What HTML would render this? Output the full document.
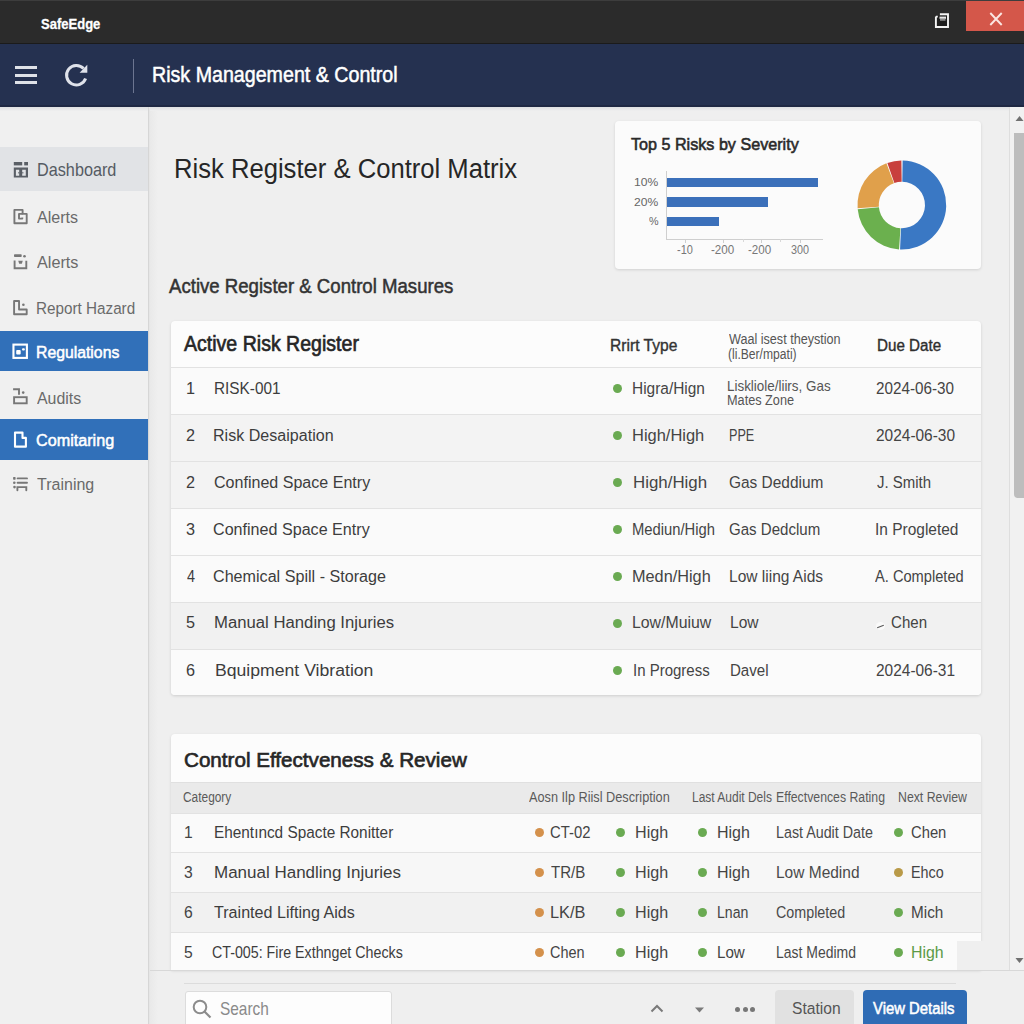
<!DOCTYPE html>
<html><head><meta charset="utf-8">
<style>
*{box-sizing:border-box;margin:0;padding:0}
html,body{width:1024px;height:1024px;overflow:hidden;background:#efefef;font-family:"Liberation Sans",sans-serif}
.a{position:absolute}
.tx{position:absolute;white-space:nowrap;transform-origin:0 0}
.dot{position:absolute;width:9px;height:9px;border-radius:50%}
.g{background:#6aaa52}
.o{background:#d4914c}
.ol{background:#b99a48}
</style></head><body>
<!-- title bar -->
<div class="a" style="left:0;top:0;width:1024px;height:44px;background:#2b2b2b"></div>
<div class="a" style="left:0;top:0;width:1024px;height:1px;background:#3d3d3d"></div>
<div class="a" style="left:0;top:43px;width:1024px;height:1px;background:#1b1b1b"></div>
<div class="a" style="left:966px;top:1px;width:58px;height:30px;background:#d4574a"></div>
<svg class="a" style="left:988px;top:10.5px" width="16" height="16" viewBox="0 0 16 16"><path d="M2.3 2L13.7 14M13.7 2L2.3 14" stroke="#fbe6e2" stroke-width="1.9"/></svg>
<svg class="a" style="left:926px;top:6px" width="32" height="32" viewBox="0 0 32 32"><rect x="10.5" y="10" width="10.5" height="10" fill="#1e1e1e"/><rect x="13.5" y="10.6" width="6.5" height="2.2" fill="#e6e6e6"/><rect x="14" y="12.8" width="5.5" height="2" fill="#8a8a8a"/><path d="M9.9 10.6H11.8M13.9 8.2H22V21H9.9V10.6" fill="none" stroke="#f4f4f4" stroke-width="1.9"/></svg>
<!-- header -->
<div class="a" style="left:0;top:44px;width:1024px;height:63px;background:#253150"></div>
<div class="a" style="left:15px;top:66px;width:22px;height:3px;background:#dfe2e8"></div>
<div class="a" style="left:15px;top:73.5px;width:22px;height:3px;background:#dfe2e8"></div>
<div class="a" style="left:15px;top:81px;width:22px;height:3px;background:#dfe2e8"></div>
<svg class="a" style="left:60px;top:58px" width="34" height="34" viewBox="0 0 34 34"><path d="M25.6 20.6A9.8 9.8 0 1 1 23.6 10.6" fill="none" stroke="#dfe2ea" stroke-width="3"/><path d="M19.6 14.8L27.3 6.8V14.8Z" fill="#dfe2ea"/></svg>
<div class="a" style="left:133px;top:59px;width:1px;height:34px;background:#6c7590"></div>
<div class="a" style="left:0;top:105px;width:1024px;height:2px;background:#1f2843"></div>
<div class="a" style="left:0;top:107px;width:1024px;height:4px;background:linear-gradient(#dedfe1,#efefef)"></div>
<!-- sidebar -->
<div class="a" style="left:0;top:111px;width:148px;height:913px;background:#f0f0f0"></div>
<div class="a" style="left:148px;top:107px;width:1px;height:917px;background:#d6d6d6"></div><div class="a" style="left:149px;top:107px;width:1px;height:917px;background:#e6e6e6"></div><div class="a" style="left:150px;top:111px;width:8px;height:913px;background:linear-gradient(90deg,#e9e9e9,#efefef)"></div>
<div class="a" style="left:0;top:147px;width:148px;height:44px;background:#e1e3e6"></div>
<div class="a" style="left:0;top:331px;width:148px;height:40px;background:#3170b9"></div>
<div class="a" style="left:0;top:419px;width:148px;height:41px;background:#3170b9"></div>
<!-- sidebar icons -->
<svg class="a" style="left:13px;top:161px" width="16" height="18" viewBox="0 0 16 18"><g fill="#5a5f66"><rect x="0.8" y="1" width="8.4" height="3.4"/><rect x="11.2" y="1" width="3.8" height="3.4"/><path fill-rule="evenodd" d="M0.8 6.4H15V16.6H0.8Z M2.9 8.7H6.2V14.8H2.9Z M9.2 8.7H12.8V14.8H9.2Z"/><rect x="5.2" y="11.2" width="1.1" height="1.2"/><rect x="9.2" y="11.2" width="1.2" height="1.2"/></g></svg>
<svg class="a" style="left:8px;top:204px" width="26" height="26" viewBox="0 0 26 26"><g fill="none" stroke="#777" stroke-width="1.9" stroke-linejoin="round"><path d="M6.4 5.9H14.6V9.9H18.7V19.2H6.4Z"/><path d="M14.6 9.9H11V14.6H14.3V13.4"/></g></svg>
<svg class="a" style="left:8px;top:249px" width="26" height="26" viewBox="0 0 26 26"><g fill="#777"><rect x="6" y="5.3" width="7.7" height="2.7" rx="0.8"/><circle cx="16.5" cy="7.3" r="1.3"/><path d="M10.2 11.7H14.8L13.8 14.7H11.2Z"/></g><path d="M6.6 11.5V19.3H18.3V11.7" fill="none" stroke="#777" stroke-width="1.9"/></svg>
<svg class="a" style="left:8px;top:295px" width="26" height="26" viewBox="0 0 26 26"><path d="M6.1 6H11.05V14.5H18.7V19.2H6.1Z" fill="none" stroke="#777" stroke-width="1.9" stroke-linejoin="round"/><circle cx="15.4" cy="9.8" r="1.3" fill="#777"/></svg>
<svg class="a" style="left:8px;top:338px" width="26" height="26" viewBox="0 0 26 26"><rect x="5.45" y="6.6" width="13.45" height="13.3" fill="none" stroke="#fff" stroke-width="2.1"/><rect x="8.2" y="12" width="4.5" height="4.4" rx="1" fill="#fff"/><rect x="14" y="10.3" width="2.9" height="2.2" rx="1.1" fill="#fff"/></svg>
<svg class="a" style="left:8px;top:384px" width="26" height="26" viewBox="0 0 26 26"><g fill="none" stroke="#777" stroke-width="1.9"><path d="M5.1 5.2H11V10.8"/><rect x="6.1" y="13.2" width="12.6" height="6.1"/></g><circle cx="15.2" cy="8.6" r="1.3" fill="#777"/></svg>
<svg class="a" style="left:8px;top:427px" width="26" height="26" viewBox="0 0 26 26"><path d="M7 5.6H14.5V10.9H17.9V19.65H7Z" fill="none" stroke="#fff" stroke-width="2.1" stroke-linejoin="round"/></svg>
<svg class="a" style="left:8px;top:471px" width="26" height="26" viewBox="0 0 26 26"><g fill="#777"><rect x="5.1" y="6.1" width="2.5" height="2.6" rx="0.6"/><circle cx="6.3" cy="11.8" r="1.3"/><circle cx="6.5" cy="16.1" r="1.3"/></g><g fill="none" stroke="#777" stroke-width="1.9" stroke-linecap="round"><path d="M9.6 7.4H19"/><path d="M9.6 11.8H19"/><path d="M9.4 19.3V16.1H18.3V19.3"/></g></svg>
<!-- chart card -->
<div class="a" style="left:615px;top:121px;width:366px;height:148px;background:#fbfbfb;border-radius:4px;box-shadow:0 1px 3px rgba(0,0,0,0.13)"></div>
<div class="a" style="left:666px;top:171px;width:1px;height:68px;background:#cfcfcf"></div>
<div class="a" style="left:666px;top:239px;width:157px;height:1px;background:#cfcfcf"></div>
<div class="a" style="left:685px;top:239px;width:1px;height:4px;background:#cfcfcf"></div>
<div class="a" style="left:723px;top:239px;width:1px;height:4px;background:#cfcfcf"></div>
<div class="a" style="left:743px;top:239px;width:1px;height:3px;background:#d8d8d8"></div>
<div class="a" style="left:761px;top:239px;width:1px;height:4px;background:#cfcfcf"></div>
<div class="a" style="left:780px;top:239px;width:1px;height:3px;background:#d8d8d8"></div>
<div class="a" style="left:800px;top:239px;width:1px;height:4px;background:#cfcfcf"></div>
<div class="a" style="left:667px;top:177.5px;width:150.5px;height:9px;background:#3b70ba"></div>
<div class="a" style="left:667px;top:197px;width:101px;height:9.5px;background:#3b70ba"></div>
<div class="a" style="left:667px;top:216.5px;width:51.5px;height:9.3px;background:#3b70ba"></div>
<svg class="a" style="left:852px;top:155px" width="100" height="100" viewBox="0 0 100 100">
<g transform="translate(50,50)">
<path id="seg" d="" />
</g>
<path d="M50.62 5.50A44.5 44.5 0 1 1 48.06 94.46L48.99 73.18A23.2 23.2 0 1 0 50.32 26.80Z" fill="#3a78c4"/><path d="M47.05 94.40A44.5 44.5 0 0 1 5.70 54.27L26.91 52.22A23.2 23.2 0 0 0 48.46 73.15Z" fill="#6bb04e"/><path d="M5.62 53.26A44.5 44.5 0 0 1 34.42 8.32L41.88 28.27A23.2 23.2 0 0 0 26.86 51.70Z" fill="#e0a04b"/><path d="M35.37 7.98A44.5 44.5 0 0 1 49.38 5.50L49.68 26.80A23.2 23.2 0 0 0 42.37 28.09Z" fill="#c8403d"/>
</svg>

<!-- card 1 -->
<div class="a" style="left:171px;top:321px;width:810px;height:374px;background:#fcfcfc;border-radius:4px;box-shadow:0 1px 3px rgba(0,0,0,0.14)"></div>
<div class="a" style="left:171px;top:367px;width:810px;height:47px;background:#fafafa"></div>
<div class="a" style="left:171px;top:414px;width:810px;height:94px;background:#f3f3f3"></div>
<div class="a" style="left:171px;top:508px;width:810px;height:94px;background:#fafafa"></div>
<div class="a" style="left:171px;top:602px;width:810px;height:47px;background:#f1f1f1"></div>
<div class="a" style="left:171px;top:649px;width:810px;height:46px;background:#fbfbfb;border-radius:0 0 4px 4px"></div>
<div class="a" style="left:171px;top:367px;width:810px;height:1px;background:#e2e2e2"></div>
<div class="a" style="left:171px;top:414px;width:810px;height:1px;background:#e2e2e2"></div>
<div class="a" style="left:171px;top:461px;width:810px;height:1px;background:#e2e2e2"></div>
<div class="a" style="left:171px;top:508px;width:810px;height:1px;background:#e2e2e2"></div>
<div class="a" style="left:171px;top:555px;width:810px;height:1px;background:#e2e2e2"></div>
<div class="a" style="left:171px;top:602px;width:810px;height:1px;background:#e2e2e2"></div>
<div class="a" style="left:171px;top:649px;width:810px;height:1px;background:#e2e2e2"></div>
<div class="dot g" style="left:612.5px;top:383.5px"></div>
<div class="dot g" style="left:612.5px;top:430.5px"></div>
<div class="dot g" style="left:612.5px;top:477.5px"></div>
<div class="dot g" style="left:612.5px;top:524.5px"></div>
<div class="dot g" style="left:612.5px;top:571.5px"></div>
<div class="dot g" style="left:612.5px;top:618.5px"></div>
<div class="dot g" style="left:612.5px;top:665.5px"></div>
<div class="a" style="left:876px;top:622px;width:9px;height:8px;background:#fafafa;border-radius:50%"></div>
<div class="a" style="left:877px;top:626px;width:7px;height:1.2px;background:#555;transform:rotate(-20deg)"></div>

<!-- card 2 -->
<div class="a" style="left:171px;top:734px;width:810px;height:236px;background:#fcfcfc;border-radius:4px 4px 0 0;box-shadow:0 1px 3px rgba(0,0,0,0.12)"></div>
<div class="a" style="left:171px;top:782px;width:810px;height:31px;background:#eaeaea"></div>
<div class="a" style="left:171px;top:813px;width:810px;height:39px;background:#fafafa"></div>
<div class="a" style="left:171px;top:852px;width:810px;height:40px;background:#f7f7f7"></div>
<div class="a" style="left:171px;top:892px;width:810px;height:40px;background:#f1f1f1"></div>
<div class="a" style="left:171px;top:932px;width:810px;height:38px;background:#fbfbfb"></div>
<div class="a" style="left:957px;top:941px;width:50px;height:29px;background:#efefef"></div>
<div class="a" style="left:171px;top:782px;width:810px;height:1px;background:#e0e0e0"></div>
<div class="a" style="left:171px;top:813px;width:810px;height:1px;background:#e2e2e2"></div>
<div class="a" style="left:171px;top:852px;width:810px;height:1px;background:#e2e2e2"></div>
<div class="a" style="left:171px;top:892px;width:810px;height:1px;background:#e2e2e2"></div>
<div class="a" style="left:171px;top:932px;width:810px;height:1px;background:#e2e2e2"></div>
<div class="dot o" style="left:534.5px;top:828px"></div>
<div class="dot o" style="left:534.5px;top:868px"></div>
<div class="dot o" style="left:534.5px;top:908px"></div>
<div class="dot o" style="left:534.5px;top:947.5px"></div>
<div class="dot g" style="left:616px;top:828px"></div>
<div class="dot g" style="left:616px;top:868px"></div>
<div class="dot g" style="left:616px;top:908px"></div>
<div class="dot g" style="left:616px;top:947.5px"></div>
<div class="dot g" style="left:698px;top:828px"></div>
<div class="dot g" style="left:698px;top:868px"></div>
<div class="dot g" style="left:698px;top:908px"></div>
<div class="dot g" style="left:698px;top:947.5px"></div>
<div class="dot g" style="left:894px;top:828px"></div>
<div class="dot ol" style="left:894px;top:868px"></div>
<div class="dot g" style="left:894px;top:908px"></div>
<div class="dot g" style="left:894px;top:947.5px"></div>

<!-- bottom bar -->
<div class="a" style="left:150px;top:970px;width:874px;height:1px;background:#d8d8d8"></div>
<div class="a" style="left:184px;top:983px;width:772px;height:1px;background:#dcdcdc"></div>
<div class="a" style="left:184.5px;top:991px;width:207px;height:40px;background:#fdfdfd;border:1px solid #dcdcdc;border-radius:3px"></div>
<svg class="a" style="left:191px;top:998px" width="22" height="22" viewBox="0 0 22 22"><circle cx="9" cy="9" r="6.3" fill="none" stroke="#8c8c8c" stroke-width="2"/><path d="M13.5 13.5L19.5 19.5" stroke="#8c8c8c" stroke-width="2.2"/></svg>
<svg class="a" style="left:649px;top:1002px" width="16" height="12" viewBox="0 0 16 12"><path d="M2.5 9.5L8 4L13.5 9.5" fill="none" stroke="#7a7a7a" stroke-width="2"/></svg>
<svg class="a" style="left:694px;top:1006px" width="11" height="8" viewBox="0 0 11 8"><path d="M1 1.5H10L5.5 6.5Z" fill="#7a7a7a"/></svg>
<div class="a" style="left:735px;top:1006.5px;width:5px;height:5px;border-radius:50%;background:#777"></div>
<div class="a" style="left:742.5px;top:1006.5px;width:5px;height:5px;border-radius:50%;background:#777"></div>
<div class="a" style="left:750px;top:1006.5px;width:5px;height:5px;border-radius:50%;background:#777"></div>
<div class="a" style="left:775px;top:990px;width:79px;height:40px;background:#e1e1e1;border-radius:4px"></div>
<div class="a" style="left:863px;top:990px;width:104px;height:40px;background:#2f6cb5;border-radius:4px"></div>

<!-- scrollbar -->
<div class="a" style="left:1009px;top:107px;width:1px;height:863px;background:#dedede"></div>
<div class="a" style="left:1010px;top:107px;width:14px;height:863px;background:#f1f1f1"></div>
<div class="a" style="left:1014px;top:133px;width:10px;height:365px;background:#bdbdbd;border-radius:0 0 0 4px"></div>
<svg class="a" style="left:1015px;top:115px" width="9" height="7" viewBox="0 0 9 7"><path d="M0.5 6H8.5L4.5 1Z" fill="#707070"/></svg>
<svg class="a" style="left:1015px;top:957px" width="9" height="7" viewBox="0 0 9 7"><path d="M0.5 1H8.5L4.5 6Z" fill="#707070"/></svg>

<div class="tx" style="left:41.10px;top:17px;font-size:14.6px;line-height:14.6px;color:#ffffff;font-weight:700;transform:scaleX(0.892);-webkit-text-stroke:0.3px #fff;">SafeEdge</div>
<div class="tx" style="left:152.37px;top:64px;font-size:21.2px;line-height:21.2px;color:#ffffff;font-weight:400;transform:scaleX(0.927);-webkit-text-stroke:0.5px #fff;">Risk Management &amp; Control</div>
<div class="tx" style="left:36.99px;top:162px;font-size:17.9px;line-height:17.9px;color:#555b63;font-weight:400;transform:scaleX(0.907);">Dashboard</div>
<div class="tx" style="left:37.00px;top:209px;font-size:17.4px;line-height:17.4px;color:#6a6a6a;font-weight:400;transform:scaleX(0.925);">Alerts</div>
<div class="tx" style="left:37.00px;top:254px;font-size:17.4px;line-height:17.4px;color:#6a6a6a;font-weight:400;transform:scaleX(0.932);">Alerts</div>
<div class="tx" style="left:36.12px;top:300px;font-size:17.4px;line-height:17.4px;color:#6a6a6a;font-weight:400;transform:scaleX(0.877);">Report Hazard</div>
<div class="tx" style="left:35.89px;top:344px;font-size:17.4px;line-height:17.4px;color:#ffffff;font-weight:400;transform:scaleX(0.907);-webkit-text-stroke:0.55px #ffffff;">Regulations</div>
<div class="tx" style="left:37.00px;top:390px;font-size:17.4px;line-height:17.4px;color:#6a6a6a;font-weight:400;transform:scaleX(0.915);">Audits</div>
<div class="tx" style="left:36.07px;top:432px;font-size:17.4px;line-height:17.4px;color:#ffffff;font-weight:400;transform:scaleX(0.930);-webkit-text-stroke:0.55px #ffffff;">Comitaring</div>
<div class="tx" style="left:37.00px;top:476px;font-size:17.4px;line-height:17.4px;color:#6a6a6a;font-weight:400;transform:scaleX(0.921);">Training</div>
<div class="tx" style="left:173.99px;top:156px;font-size:26.8px;line-height:26.8px;color:#262626;font-weight:400;transform:scaleX(0.956);">Risk Register &amp; Control Matrix</div>
<div class="tx" style="left:169.30px;top:277px;font-size:19.7px;line-height:19.7px;color:#333333;font-weight:400;transform:scaleX(0.945);-webkit-text-stroke:0.5px #333;">Active Register &amp; Control Masures</div>
<div class="tx" style="left:631.30px;top:136px;font-size:17.4px;line-height:17.4px;color:#2a2a2a;font-weight:400;transform:scaleX(0.928);-webkit-text-stroke:0.6px #2a2a2a;">Top 5 Risks by Severity</div>
<div class="tx" style="left:633.78px;top:177px;font-size:11.8px;line-height:11.8px;color:#666;font-weight:400;transform:scaleX(1.023);">10%</div>
<div class="tx" style="left:633.78px;top:197px;font-size:11.8px;line-height:11.8px;color:#666;font-weight:400;transform:scaleX(1.023);">20%</div>
<div class="tx" style="left:648.90px;top:215px;font-size:11.7px;line-height:11.7px;color:#666;font-weight:400;transform:scaleX(0.920);">%</div>
<div class="tx" style="left:677.15px;top:244px;font-size:12.9px;line-height:12.9px;color:#777;font-weight:400;transform:scaleX(0.853);">-10</div>
<div class="tx" style="left:710.85px;top:244px;font-size:12.9px;line-height:12.9px;color:#777;font-weight:400;transform:scaleX(0.900);">-200</div>
<div class="tx" style="left:748.35px;top:244px;font-size:12.9px;line-height:12.9px;color:#777;font-weight:400;transform:scaleX(0.900);">-200</div>
<div class="tx" style="left:790.91px;top:244px;font-size:12.9px;line-height:12.9px;color:#777;font-weight:400;transform:scaleX(0.838);">300</div>
<div class="tx" style="left:183.90px;top:334px;font-size:21.3px;line-height:21.3px;color:#262626;font-weight:400;transform:scaleX(0.918);-webkit-text-stroke:0.65px #262626;">Active Risk Register</div>
<div class="tx" style="left:610.34px;top:337px;font-size:17.1px;line-height:17.1px;color:#333;font-weight:400;transform:scaleX(0.913);-webkit-text-stroke:0.4px #333;">Rrirt Type</div>
<div class="tx" style="left:728.75px;top:332px;font-size:14.0px;line-height:14.0px;color:#555;font-weight:400;transform:scaleX(0.900);">Waal isest theystion</div>
<div class="tx" style="left:727.88px;top:347px;font-size:14.0px;line-height:14.0px;color:#555;font-weight:400;transform:scaleX(0.865);">(li.Ber/mpati)</div>
<div class="tx" style="left:877.12px;top:337px;font-size:17.3px;line-height:17.3px;color:#2e2e2e;font-weight:400;transform:scaleX(0.879);-webkit-text-stroke:0.4px #2e2e2e;">Due Date</div>
<div class="tx" style="left:185.81px;top:380px;font-size:17.3px;line-height:17.3px;color:#3d3d3d;font-weight:400;transform:scaleX(0.938);">1</div>
<div class="tx" style="left:214.31px;top:380px;font-size:17.3px;line-height:17.3px;color:#3d3d3d;font-weight:400;transform:scaleX(0.888);">RISK-001</div>
<div class="tx" style="left:631.57px;top:381px;font-size:16.7px;line-height:16.7px;color:#444;font-weight:400;transform:scaleX(0.925);">Higra/Hign</div>
<div class="tx" style="left:876.40px;top:381px;font-size:16.9px;line-height:16.9px;color:#444;font-weight:400;transform:scaleX(0.902);">2024-06-30</div>
<div class="tx" style="left:185.81px;top:427px;font-size:17.3px;line-height:17.3px;color:#3d3d3d;font-weight:400;transform:scaleX(0.938);">2</div>
<div class="tx" style="left:213.47px;top:427px;font-size:17.3px;line-height:17.3px;color:#3d3d3d;font-weight:400;transform:scaleX(0.930);">Risk Desaipation</div>
<div class="tx" style="left:631.51px;top:428px;font-size:16.7px;line-height:16.7px;color:#444;font-weight:400;transform:scaleX(0.986);">High/High</div>
<div class="tx" style="left:728.74px;top:428px;font-size:16.7px;line-height:16.7px;color:#444;font-weight:400;transform:scaleX(0.758);">PPE</div>
<div class="tx" style="left:876.09px;top:428px;font-size:16.9px;line-height:16.9px;color:#444;font-weight:400;transform:scaleX(0.915);">2024-06-30</div>
<div class="tx" style="left:185.81px;top:474px;font-size:17.3px;line-height:17.3px;color:#3d3d3d;font-weight:400;transform:scaleX(0.938);">2</div>
<div class="tx" style="left:213.87px;top:474px;font-size:17.3px;line-height:17.3px;color:#3d3d3d;font-weight:400;transform:scaleX(0.929);">Confined Space Entry</div>
<div class="tx" style="left:632.74px;top:475px;font-size:16.7px;line-height:16.7px;color:#444;font-weight:400;transform:scaleX(1.011);">High/High</div>
<div class="tx" style="left:728.58px;top:475px;font-size:16.7px;line-height:16.7px;color:#444;font-weight:400;transform:scaleX(0.925);">Gas Deddium</div>
<div class="tx" style="left:876.60px;top:475px;font-size:16.9px;line-height:16.9px;color:#444;font-weight:400;transform:scaleX(0.886);">J. Smith</div>
<div class="tx" style="left:185.81px;top:521px;font-size:17.3px;line-height:17.3px;color:#3d3d3d;font-weight:400;transform:scaleX(0.938);">3</div>
<div class="tx" style="left:213.47px;top:521px;font-size:17.3px;line-height:17.3px;color:#3d3d3d;font-weight:400;transform:scaleX(0.932);">Confined Space Entry</div>
<div class="tx" style="left:632.11px;top:522px;font-size:16.7px;line-height:16.7px;color:#444;font-weight:400;transform:scaleX(0.886);">Mediun/High</div>
<div class="tx" style="left:728.60px;top:522px;font-size:16.7px;line-height:16.7px;color:#444;font-weight:400;transform:scaleX(0.902);">Gas Dedclum</div>
<div class="tx" style="left:875.42px;top:522px;font-size:16.9px;line-height:16.9px;color:#444;font-weight:400;transform:scaleX(0.916);">In Progleted</div>
<div class="tx" style="left:186.75px;top:568px;font-size:17.3px;line-height:17.3px;color:#3d3d3d;font-weight:400;transform:scaleX(0.833);">4</div>
<div class="tx" style="left:213.47px;top:568px;font-size:17.3px;line-height:17.3px;color:#3d3d3d;font-weight:400;transform:scaleX(0.933);">Chemical Spill - Storage</div>
<div class="tx" style="left:632.03px;top:569px;font-size:16.7px;line-height:16.7px;color:#444;font-weight:400;transform:scaleX(0.975);">Medn/High</div>
<div class="tx" style="left:728.57px;top:569px;font-size:16.7px;line-height:16.7px;color:#444;font-weight:400;transform:scaleX(0.930);">Low liing Aids</div>
<div class="tx" style="left:875.00px;top:569px;font-size:16.9px;line-height:16.9px;color:#444;font-weight:400;transform:scaleX(0.867);">A. Completed</div>
<div class="tx" style="left:185.81px;top:614px;font-size:17.3px;line-height:17.3px;color:#3d3d3d;font-weight:400;transform:scaleX(0.938);">5</div>
<div class="tx" style="left:214.33px;top:614px;font-size:17.3px;line-height:17.3px;color:#3d3d3d;font-weight:400;transform:scaleX(0.967);">Manual Handing Injuries</div>
<div class="tx" style="left:631.55px;top:615px;font-size:16.7px;line-height:16.7px;color:#444;font-weight:400;transform:scaleX(0.949);">Low/Muiuw</div>
<div class="tx" style="left:730.32px;top:615px;font-size:16.7px;line-height:16.7px;color:#444;font-weight:400;transform:scaleX(0.933);">Low</div>
<div class="tx" style="left:890.71px;top:615px;font-size:16.9px;line-height:16.9px;color:#444;font-weight:400;transform:scaleX(0.892);">Chen</div>
<div class="tx" style="left:185.81px;top:662px;font-size:17.3px;line-height:17.3px;color:#3d3d3d;font-weight:400;transform:scaleX(0.938);">6</div>
<div class="tx" style="left:214.68px;top:662px;font-size:17.3px;line-height:17.3px;color:#3d3d3d;font-weight:400;transform:scaleX(1.020);">Bquipment Vibration</div>
<div class="tx" style="left:632.85px;top:663px;font-size:16.7px;line-height:16.7px;color:#444;font-weight:400;transform:scaleX(0.899);">In Progress</div>
<div class="tx" style="left:729.60px;top:663px;font-size:16.7px;line-height:16.7px;color:#444;font-weight:400;transform:scaleX(0.902);">Davel</div>
<div class="tx" style="left:876.09px;top:663px;font-size:16.9px;line-height:16.9px;color:#444;font-weight:400;transform:scaleX(0.915);">2024-06-31</div>
<div class="tx" style="left:727.36px;top:379px;font-size:14.3px;line-height:14.3px;color:#555;font-weight:400;transform:scaleX(0.938);">Liskliole/liirs, Gas</div>
<div class="tx" style="left:727.39px;top:393px;font-size:14.0px;line-height:14.0px;color:#555;font-weight:400;transform:scaleX(0.907);">Mates Zone</div>
<div class="tx" style="left:184.20px;top:750px;font-size:20.7px;line-height:20.7px;color:#262626;font-weight:400;transform:scaleX(0.997);-webkit-text-stroke:0.65px #262626;">Control Effectveness &amp; Review</div>
<div class="tx" style="left:182.95px;top:790px;font-size:14.0px;line-height:14.0px;color:#5a5a5a;font-weight:400;transform:scaleX(0.850);">Category</div>
<div class="tx" style="left:528.75px;top:790px;font-size:14.0px;line-height:14.0px;color:#5a5a5a;font-weight:400;transform:scaleX(0.909);">Aosn Ilp Riisl Description</div>
<div class="tx" style="left:691.64px;top:790px;font-size:14.0px;line-height:14.0px;color:#5a5a5a;font-weight:400;transform:scaleX(0.856);">Last Audit Dels</div>
<div class="tx" style="left:775.52px;top:790px;font-size:14.0px;line-height:14.0px;color:#5a5a5a;font-weight:400;transform:scaleX(0.877);">Effectvences Rating</div>
<div class="tx" style="left:898.02px;top:790px;font-size:14.0px;line-height:14.0px;color:#5a5a5a;font-weight:400;transform:scaleX(0.878);">Next Review</div>
<div class="tx" style="left:184.30px;top:824px;font-size:17.4px;line-height:17.4px;color:#444;font-weight:400;transform:scaleX(0.900);">1</div>
<div class="tx" style="left:213.82px;top:824px;font-size:17.4px;line-height:17.4px;color:#3d3d3d;font-weight:400;transform:scaleX(0.883);">Ehentıncd Spacte Ronitter</div>
<div class="tx" style="left:550.40px;top:824px;font-size:17.4px;line-height:17.4px;color:#444;font-weight:400;transform:scaleX(0.853);">CT-02</div>
<div class="tx" style="left:634.57px;top:824px;font-size:17.4px;line-height:17.4px;color:#444;font-weight:400;transform:scaleX(0.926);">High</div>
<div class="tx" style="left:716.58px;top:824px;font-size:17.4px;line-height:17.4px;color:#444;font-weight:400;transform:scaleX(0.919);">High</div>
<div class="tx" style="left:775.58px;top:824px;font-size:17.4px;line-height:17.4px;color:#4a4a4a;font-weight:400;transform:scaleX(0.821);">Last Audit Date</div>
<div class="tx" style="left:911.15px;top:824px;font-size:17.4px;line-height:17.4px;color:#444;font-weight:400;transform:scaleX(0.850);">Chen</div>
<div class="tx" style="left:184.30px;top:864px;font-size:17.4px;line-height:17.4px;color:#444;font-weight:400;transform:scaleX(0.900);">3</div>
<div class="tx" style="left:214.22px;top:864px;font-size:17.4px;line-height:17.4px;color:#3d3d3d;font-weight:400;transform:scaleX(0.977);">Manual Handling Injuries</div>
<div class="tx" style="left:551.25px;top:864px;font-size:17.4px;line-height:17.4px;color:#444;font-weight:400;transform:scaleX(0.865);">TR/B</div>
<div class="tx" style="left:634.57px;top:864px;font-size:17.4px;line-height:17.4px;color:#444;font-weight:400;transform:scaleX(0.926);">High</div>
<div class="tx" style="left:716.58px;top:864px;font-size:17.4px;line-height:17.4px;color:#444;font-weight:400;transform:scaleX(0.919);">High</div>
<div class="tx" style="left:775.51px;top:864px;font-size:17.4px;line-height:17.4px;color:#4a4a4a;font-weight:400;transform:scaleX(0.891);">Low Medind</div>
<div class="tx" style="left:911.18px;top:864px;font-size:17.4px;line-height:17.4px;color:#444;font-weight:400;transform:scaleX(0.824);">Ehco</div>
<div class="tx" style="left:184.30px;top:904px;font-size:17.4px;line-height:17.4px;color:#444;font-weight:400;transform:scaleX(0.900);">6</div>
<div class="tx" style="left:214.10px;top:904px;font-size:17.4px;line-height:17.4px;color:#3d3d3d;font-weight:400;transform:scaleX(0.926);">Trainted Lifting Aids</div>
<div class="tx" style="left:550.31px;top:904px;font-size:17.4px;line-height:17.4px;color:#444;font-weight:400;transform:scaleX(0.938);">LK/B</div>
<div class="tx" style="left:634.57px;top:904px;font-size:17.4px;line-height:17.4px;color:#444;font-weight:400;transform:scaleX(0.926);">High</div>
<div class="tx" style="left:716.69px;top:904px;font-size:17.4px;line-height:17.4px;color:#444;font-weight:400;transform:scaleX(0.811);">Lnan</div>
<div class="tx" style="left:775.58px;top:904px;font-size:17.4px;line-height:17.4px;color:#4a4a4a;font-weight:400;transform:scaleX(0.822);">Completed</div>
<div class="tx" style="left:911.12px;top:904px;font-size:17.4px;line-height:17.4px;color:#444;font-weight:400;transform:scaleX(0.879);">Mich</div>
<div class="tx" style="left:184.30px;top:944px;font-size:17.4px;line-height:17.4px;color:#444;font-weight:400;transform:scaleX(0.900);">5</div>
<div class="tx" style="left:212.48px;top:944px;font-size:17.4px;line-height:17.4px;color:#3d3d3d;font-weight:400;transform:scaleX(0.819);">CT-005: Fire Exthnget Checks</div>
<div class="tx" style="left:550.42px;top:944px;font-size:17.4px;line-height:17.4px;color:#444;font-weight:400;transform:scaleX(0.831);">Chen</div>
<div class="tx" style="left:634.57px;top:944px;font-size:17.4px;line-height:17.4px;color:#444;font-weight:400;transform:scaleX(0.926);">High</div>
<div class="tx" style="left:716.63px;top:944px;font-size:17.4px;line-height:17.4px;color:#444;font-weight:400;transform:scaleX(0.871);">Low</div>
<div class="tx" style="left:775.60px;top:944px;font-size:17.4px;line-height:17.4px;color:#4a4a4a;font-weight:400;transform:scaleX(0.804);">Last Medimd</div>
<div class="tx" style="left:911.09px;top:944px;font-size:17.4px;line-height:17.4px;color:#5b9a47;font-weight:400;transform:scaleX(0.912);">High</div>
<div class="tx" style="left:219.76px;top:1000px;font-size:18.4px;line-height:18.4px;color:#8a8a8a;font-weight:400;transform:scaleX(0.838);">Search</div>
<div class="tx" style="left:792.46px;top:1001px;font-size:16.7px;line-height:16.7px;color:#555;font-weight:400;transform:scaleX(0.936);">Station</div>
<div class="tx" style="left:873.00px;top:1001px;font-size:16.7px;line-height:16.7px;color:#ffffff;font-weight:400;transform:scaleX(0.890);-webkit-text-stroke:0.55px #ffffff;">View Details</div>
</body></html>
